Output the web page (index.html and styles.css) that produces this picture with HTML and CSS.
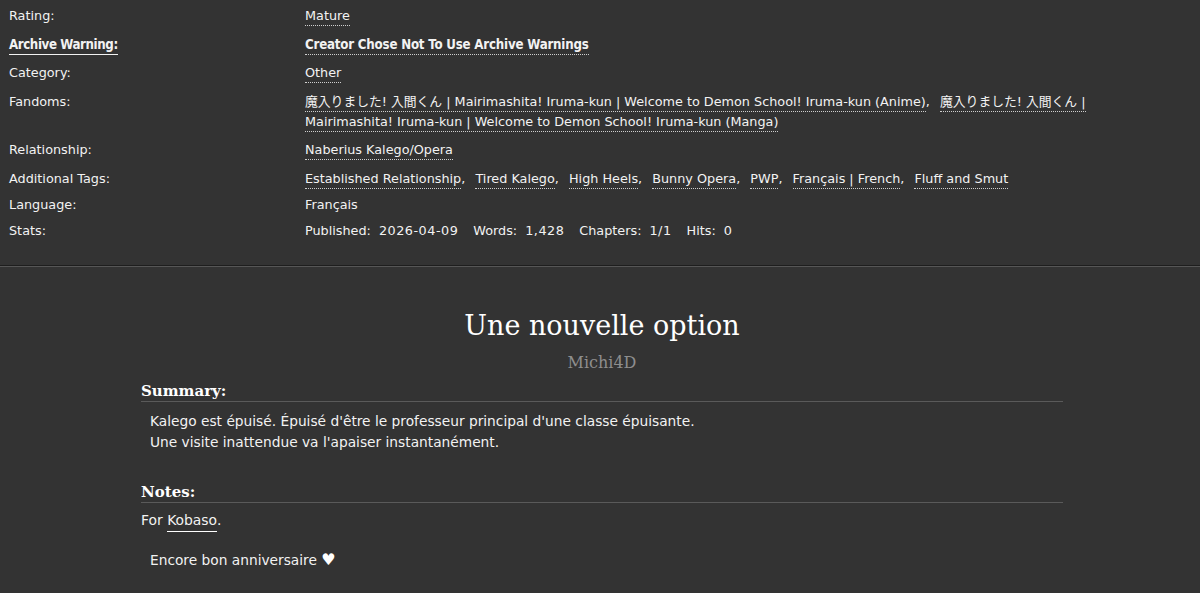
FILE: index.html
```html
<!DOCTYPE html>
<html lang="fr">
<head>
<meta charset="utf-8">
<title>Une nouvelle option</title>
<link rel="stylesheet" href="styles.css">
</head>
<body>
<div class="meta">
  <dl class="meta-list">
    <dt class="row tagrow">Rating:</dt>
    <dd class="row tagrow"><a class="tag" href="#">Mature</a></dd>

    <dt class="row tagrow"><span class="warn-label">Archive Warning:</span></dt>
    <dd class="row tagrow"><a class="tag bold" href="#">Creator Chose Not To Use Archive Warnings</a></dd>

    <dt class="row tagrow">Category:</dt>
    <dd class="row tagrow"><a class="tag" href="#">Other</a></dd>

    <dt class="row tagrow">Fandoms:</dt>
    <dd class="row tagrow"><ul class="tags"><li><a class="tag" href="#">魔入りました! 入間くん | Mairimashita! Iruma-kun | Welcome to Demon School! Iruma-kun (Anime)</a>,</li> <li><a class="tag" href="#">魔入りました! 入間くん | Mairimashita! Iruma-kun | Welcome to Demon School! Iruma-kun (Manga)</a></li></ul></dd>

    <dt class="row tagrow">Relationship:</dt>
    <dd class="row tagrow"><a class="tag" href="#">Naberius Kalego/Opera</a></dd>

    <dt class="row tagrow short">Additional Tags:</dt>
    <dd class="row tagrow short"><ul class="tags"><li><a class="tag" href="#">Established Relationship</a>,</li> <li><a class="tag" href="#">Tired Kalego</a>,</li> <li><a class="tag" href="#">High Heels</a>,</li> <li><a class="tag" href="#">Bunny Opera</a>,</li> <li><a class="tag" href="#">PWP</a>,</li> <li><a class="tag" href="#">Français | French</a>,</li> <li><a class="tag" href="#">Fluff and Smut</a></li></ul></dd>

    <dt class="row">Language:</dt>
    <dd class="row">Français</dd>

    <dt class="row">Stats:</dt>
    <dd class="row stats"><span class="lbl">Published:</span><span class="num">2026-04-09</span><span class="lbl">Words:</span><span class="num">1,428</span><span class="lbl">Chapters:</span><span class="num">1/1</span><span class="lbl">Hits:</span><span class="num">0</span></dd>
  </dl>
</div>

<main class="work">
  <h2 class="title">Une nouvelle option</h2>
  <h3 class="byline">Michi4D</h3>

  <section class="module">
    <h3 class="heading">Summary:</h3>
    <blockquote class="userstuff">
      <p>Kalego est épuisé. Épuisé d'être le professeur principal d'une classe épuisante.<br>Une visite inattendue va l'apaiser instantanément.</p>
    </blockquote>
  </section>

  <section class="module notes">
    <h3 class="heading">Notes:</h3>
    <p class="for">For <a class="gift" href="#">Kobaso</a>.</p>
    <blockquote class="userstuff">
      <p>Encore bon anniversaire <span class="heart">♥</span></p>
    </blockquote>
  </section>
</main>
</body>
</html>
```

FILE: styles.css
```css
html, body {
  margin: 0;
  padding: 0;
  background: #333333;
  color: #f2f2f2;
  font-family: "DejaVu Sans", "Noto Sans CJK JP", sans-serif;
  font-size: 12.8px;
}

a {
  color: #f2f2f2;
  text-decoration: none;
}

.meta {
  padding: 6px 0 18px 9px;
  border-bottom: 1px solid #1e1e1e;
}

.meta-list {
  margin: 0;
  display: grid;
  grid-template-columns: 296px 810px;
  line-height: 20px;
}

.meta-list dt,
.meta-list dd {
  margin: 0;
}

.row {
  padding-bottom: 6px;
}

.row.tagrow {
  padding-bottom: 8.5px;
}

.row.tagrow.short {
  padding-bottom: 6px;
}

.warn-label {
  font-family: "DejaVu Sans Condensed", "DejaVu Sans", sans-serif;
  font-weight: bold;
  font-size: 13.2px;
  letter-spacing: -0.4px;
  border-bottom: 1px solid #f2f2f2;
  padding-bottom: 2px;
}

.tag {
  border-bottom: 1px dotted #cfcfcf;
  padding-bottom: 2px;
}

.tag.bold {
  font-family: "DejaVu Sans Condensed", "DejaVu Sans", sans-serif;
  font-weight: bold;
  font-size: 13.2px;
  letter-spacing: -0.2px;
}

.tags {
  list-style: none;
  margin: 0;
  padding: 0;
  display: inline;
}

.tags li {
  display: inline;
  margin-right: 6px;
}

.stats .lbl {
  margin-right: 8px;
}

.stats .num {
  margin-right: 15px;
  letter-spacing: 0.5px;
}

.work {
  border-top: 1px solid #565656;
  padding: 42px 137px 40px 141px;
}

.title {
  margin: 0;
  text-align: center;
  font-family: "DejaVu Serif", "Liberation Serif", serif;
  font-weight: normal;
  font-size: 27px;
  line-height: 34px;
  color: #ffffff;
}

.byline {
  margin: 9px 0 0;
  text-align: center;
  font-family: "DejaVu Serif", "Liberation Serif", serif;
  font-weight: normal;
  font-size: 16px;
  line-height: 22px;
  color: #8e8e8e;
}

.module {
  margin-top: 7px;
}

.heading {
  margin: 0;
  font-family: "DejaVu Serif", "Liberation Serif", serif;
  font-weight: bold;
  font-size: 15px;
  line-height: 20px;
  color: #ffffff;
  border-bottom: 1px solid #5a5a5a;
}

.userstuff {
  margin: 0;
  padding-left: 9px;
}

.userstuff p {
  margin: 0;
  font-size: 13.75px;
  line-height: 21px;
}

.module .userstuff p {
  margin-top: 9px;
}

.notes {
  margin-top: 29px;
}

.for {
  margin: 7px 0 0;
  font-size: 13.9px;
  line-height: 21px;
}

.gift {
  border-bottom: 1px solid #ffffff;
  padding-bottom: 3px;
}

.notes .userstuff p {
  margin-top: 19px;
}

.heart {
  color: #ffffff;
  font-size: 16px;
  line-height: 1;
}
```
